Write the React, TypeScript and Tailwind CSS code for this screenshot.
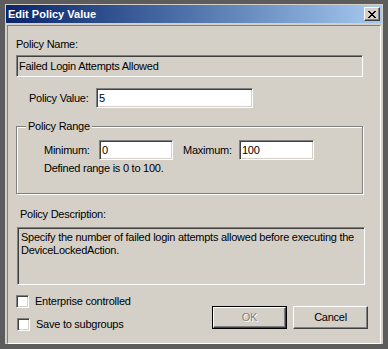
const sunken =
  "border border-t-[#808080] border-l-[#808080] border-b-white border-r-white shadow-[inset_1px_1px_0_#404040,inset_-1px_-1px_0_#d4d0c8]";
const raised =
  "border border-t-white border-l-white border-b-[#404040] border-r-[#404040] shadow-[inset_-1px_-1px_0_#808080,inset_1px_1px_0_#d4d0c8]";

function CloseGlyph() {
  const px = [
    [0, 0], [1, 0], [6, 0], [7, 0],
    [1, 1], [2, 1], [5, 1], [6, 1],
    [2, 2], [3, 2], [4, 2], [5, 2],
    [3, 3], [4, 3],
    [2, 4], [3, 4], [4, 4], [5, 4],
    [1, 5], [2, 5], [5, 5], [6, 5],
    [0, 6], [1, 6], [6, 6], [7, 6],
  ];
  return (
    <svg width="8" height="7" viewBox="0 0 8 7" shapeRendering="crispEdges">
      {px.map(([x, y], i) => (
        <rect key={i} x={x} y={y} width="1" height="1" fill="#000" />
      ))}
    </svg>
  );
}

function Checkbox({ label, offset }: { label: string; offset: string }) {
  return (
    <div className={`flex items-center h-[13px] ${offset}`}>
      <div className={`w-[13px] h-[13px] bg-white ${sunken}`}></div>
      <span className="ml-[6px] leading-[13px]">{label}</span>
    </div>
  );
}

export default function App() {
  return (
    <div className="w-[388px] h-[349px] bg-[#5c5c5c] pt-[4px] pl-[5px] font-['Liberation_Sans',Arial,sans-serif] text-[11px] tracking-[-0.25px] text-black overflow-hidden">
      <div className="w-[378px] h-[340px] bg-[#d4d0c8] pt-[1px] px-[1px] flex flex-col">
        {/* title bar */}
        <div className="h-[18px] flex items-center justify-between bg-gradient-to-r from-[#0a246a] to-[#a6caf0] pl-[2px] pr-[2px]">
          <span className="text-white font-bold text-[11px] tracking-normal leading-[13px]">Edit Policy Value</span>
          <div className={`w-[16px] h-[14px] bg-[#d4d0c8] flex items-center justify-center ${raised}`}>
            <CloseGlyph />
          </div>
        </div>

        {/* client area */}
        <div className="mt-[2px] mx-[1px] h-[319px] border border-t-[#808080] border-l-[#808080] border-b-white border-r-white flex flex-col pr-[12px]">
          <div className="mt-[12px] ml-[8px] leading-[13px]">Policy Name:</div>
          <div className={`mt-[4px] ml-[8px] w-[347px] h-[22px] flex items-center pl-[2px] ${sunken}`}>
            Failed Login Attempts Allowed
          </div>

          <div className="mt-[11px] ml-[21px] flex items-center h-[20px]">
            <span className="w-[67px]">Policy Value:</span>
            <div className={`w-[157px] h-[20px] bg-white flex items-center pl-[2px] ${sunken}`}>5</div>
          </div>

          {/* policy range group */}
          <div className="relative mt-[18px] ml-[8px] w-[347px] h-[68px] border border-[#808080] shadow-[inset_1px_1px_0_#fff,1px_1px_0_#fff]">
            <span className="absolute left-[9px] -top-[7px] px-[2px] bg-[#d4d0c8] leading-[13px]">Policy Range</span>
            <div className="mt-[13px] ml-[27px] flex items-center h-[20px]">
              <span className="w-[55px]">Minimum:</span>
              <div className={`w-[74px] h-[20px] bg-white flex items-center pl-[2px] ${sunken}`}>0</div>
              <span className="ml-[10px] w-[56px]">Maximum:</span>
              <div className={`w-[75px] h-[20px] bg-white flex items-center pl-[2px] ${sunken}`}>100</div>
            </div>
            <div className="mt-[2px] ml-[27px] leading-[13px]">Defined range is 0 to 100.</div>
          </div>

          <div className="mt-[14px] ml-[12px] leading-[13px]">Policy Description:</div>
          <div className={`mt-[6px] ml-[9px] w-[348px] h-[58px] pl-[3px] pt-[3px] pr-[2px] leading-[13px] ${sunken}`}>
            Specify the number of failed login attempts allowed before executing the DeviceLockedAction.
          </div>

          <div className="flex">
            <div className="flex flex-col mt-[10px] gap-[10px]">
              <Checkbox label="Enterprise controlled" offset="ml-[8px]" />
              <Checkbox label="Save to subgroups" offset="ml-[9px]" />
            </div>
            <div className="ml-auto mt-[21px] flex gap-[6px]">
              <div className="w-[75px] h-[23px] border border-black">
                <div className={`w-full h-full flex items-center justify-center text-[#808080] [text-shadow:1px_1px_0_#fff] ${raised}`}>
                  OK
                </div>
              </div>
              <div className={`w-[75px] h-[23px] flex items-center justify-center ${raised}`}>Cancel</div>
            </div>
          </div>
        </div>
      </div>
    </div>
  );
}
